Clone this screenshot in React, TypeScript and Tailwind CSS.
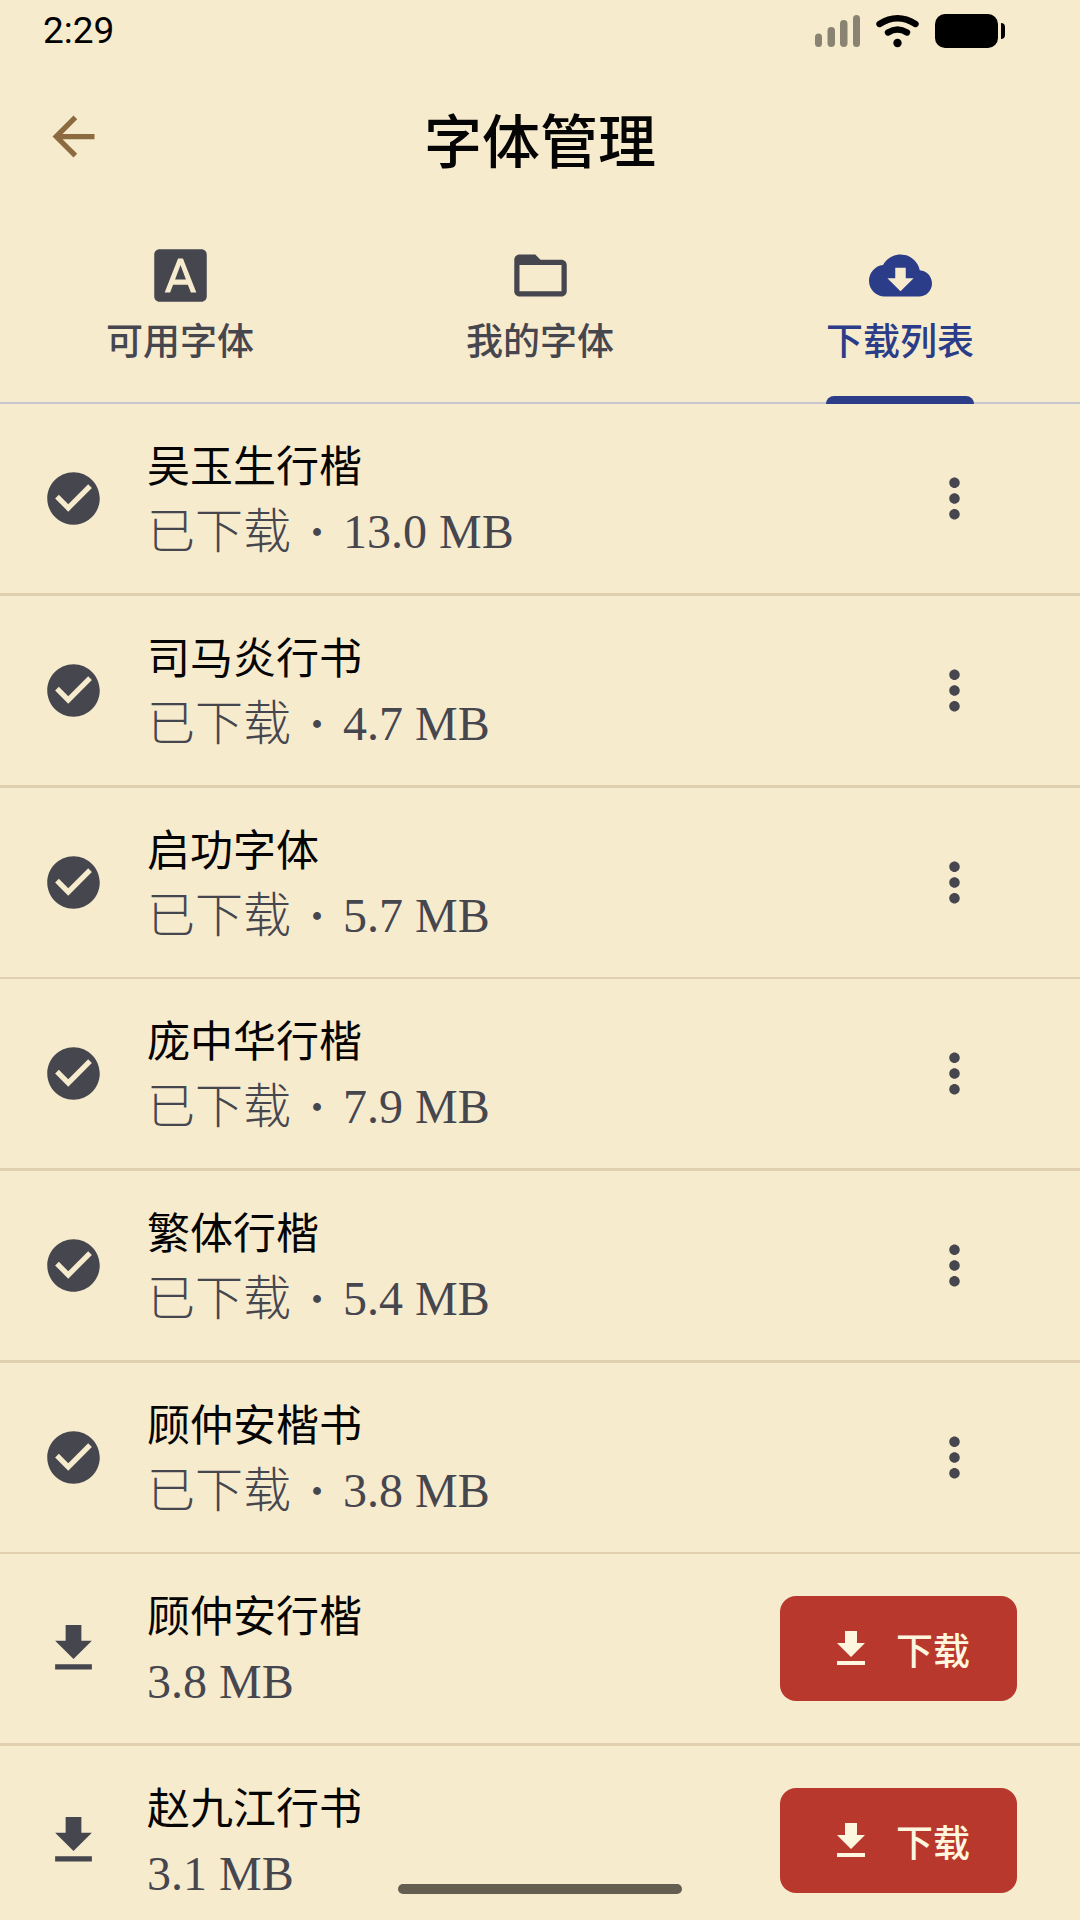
import {
  MdArrowBack,
  MdCheckCircle,
  MdCloudDownload,
  MdDownload,
  MdFolderOpen,
  MdFontDownload,
  MdMoreVert,
} from 'react-icons/md'
import type { IconType } from 'react-icons'

type Tab = { label: string; icon: IconType; active?: boolean }

type FontItem = { name: string; size: string; downloaded: boolean }

const tabs: Tab[] = [
  { label: '可用字体', icon: MdFontDownload },
  { label: '我的字体', icon: MdFolderOpen },
  { label: '下载列表', icon: MdCloudDownload, active: true },
]

const fonts: FontItem[] = [
  { name: '吴玉生行楷', size: '13.0 MB', downloaded: true },
  { name: '司马炎行书', size: '4.7 MB', downloaded: true },
  { name: '启功字体', size: '5.7 MB', downloaded: true },
  { name: '庞中华行楷', size: '7.9 MB', downloaded: true },
  { name: '繁体行楷', size: '5.4 MB', downloaded: true },
  { name: '顾仲安楷书', size: '3.8 MB', downloaded: true },
  { name: '顾仲安行楷', size: '3.8 MB', downloaded: false },
  { name: '赵九江行书', size: '3.1 MB', downloaded: false },
]

function StatusBar() {
  return (
    <div className="flex h-[61px] shrink-0 items-center justify-between pl-[43px] pr-[75px]">
      <span className="font-['Roboto',sans-serif] text-[37px] leading-[61px] text-black">2:29</span>
      <svg width="190" height="36" viewBox="0 0 190 36" aria-hidden="true">
        <g fill="#8a8371">
          <rect x="0" y="20.5" width="7" height="13.5" rx="3.5" />
          <rect x="12.5" y="14" width="7.5" height="20" rx="3.7" />
          <rect x="25" y="7" width="7.5" height="27" rx="3.7" />
          <rect x="38" y="2" width="7" height="32" rx="3.5" />
        </g>
        <g fill="none" stroke="#000" strokeWidth="6.4" strokeLinecap="round">
          <path d="M64.5 11Q82.5 -0.6 100.5 11" />
          <path d="M73 19.5Q82.5 13.5 92 19.5" />
        </g>
        <circle cx="82.5" cy="30" r="4.2" />
        <rect x="120" y="1" width="63" height="34" rx="10" />
        <path d="M186 10c2.500 0 4 1.500 4 4v8c0 2.500-1.500 4-4 4z" />
      </svg>
    </div>
  )
}

function Header() {
  return (
    <header className="grid h-[151px] shrink-0 grid-cols-[63px_1fr_63px] items-center px-[42px]">
      <button type="button" aria-label="返回" className="text-[#8b6b3f]">
        <MdArrowBack size={63} />
      </button>
      <h1 className="pt-0.5 text-center text-[58px] leading-[80px] font-medium text-[#050505]">字体管理</h1>
    </header>
  )
}

function TabBar() {
  return (
    <nav className="grid h-48 shrink-0 grid-cols-3 border-b-2 border-[#c7c5d0]">
      {tabs.map(({ label, icon: Icon, active }) => (
        <button
          key={label}
          type="button"
          aria-current={active ? 'page' : undefined}
          className={`relative flex flex-col items-center pt-8 ${active ? 'text-[#2b3c88]' : 'text-[#46464f]'}`}
        >
          <Icon size={63} />
          <span className="text-[37px] leading-[64px] font-medium">{label}</span>
          {active && <span className="absolute -bottom-0.5 h-2 w-[148px] rounded-t-lg bg-[#2b3c88]" />}
        </button>
      ))}
    </nav>
  )
}

function FontRow({ name, size, downloaded }: FontItem) {
  const StateIcon = downloaded ? MdCheckCircle : MdDownload
  return (
    <li className="box-content flex h-[189px] shrink-0 items-center border-b-3 border-[#e0d0b0] pr-[63px] pl-[42px] nth-[3n]:border-b-2">
      <StateIcon size={63} className="shrink-0 text-[#46464f]" />
      <div className="min-w-0 flex-1 pl-[42px]">
        <p className="text-[43px] leading-[66px] text-[#050505]">{name}</p>
        <p className="font-['Liberation_Serif','Noto_Sans_CJK_SC',serif] text-[48px] leading-[72px] text-[#46464f]">
          {downloaded && (
            <>
              <span className="font-light">已下载</span>
              <span className="px-1.5 font-bold"> · </span>
            </>
          )}
          {size}
        </p>
      </div>
      {downloaded ? (
        <button type="button" aria-label={`${name} 更多`} className="flex size-[126px] items-center justify-center text-[#46464f]">
          <MdMoreVert size={63} />
        </button>
      ) : (
        <button
          type="button"
          className="flex h-[105px] items-center gap-[21px] rounded-2xl bg-[#b8382d] px-[47px] text-[37px] leading-[56px] font-medium text-[#fff6df]"
        >
          <MdDownload size={48} />
          下载
        </button>
      )}
    </li>
  )
}

export default function App() {
  return (
    <div className="flex h-screen flex-col overflow-hidden bg-[#f7ebce] font-['Noto_Sans_CJK_SC',sans-serif]" lang="zh-CN">
      <StatusBar />
      <Header />
      <TabBar />
      <ul className="flex min-h-0 flex-1 flex-col overflow-hidden">
        {fonts.map((font) => (
          <FontRow key={font.name} {...font} />
        ))}
      </ul>
      {/* gesture bar floats over the list */}
      <div className="fixed bottom-[26px] left-1/2 h-2.5 w-[284px] -translate-x-1/2 rounded-full bg-[#635e50]" />
    </div>
  )
}
